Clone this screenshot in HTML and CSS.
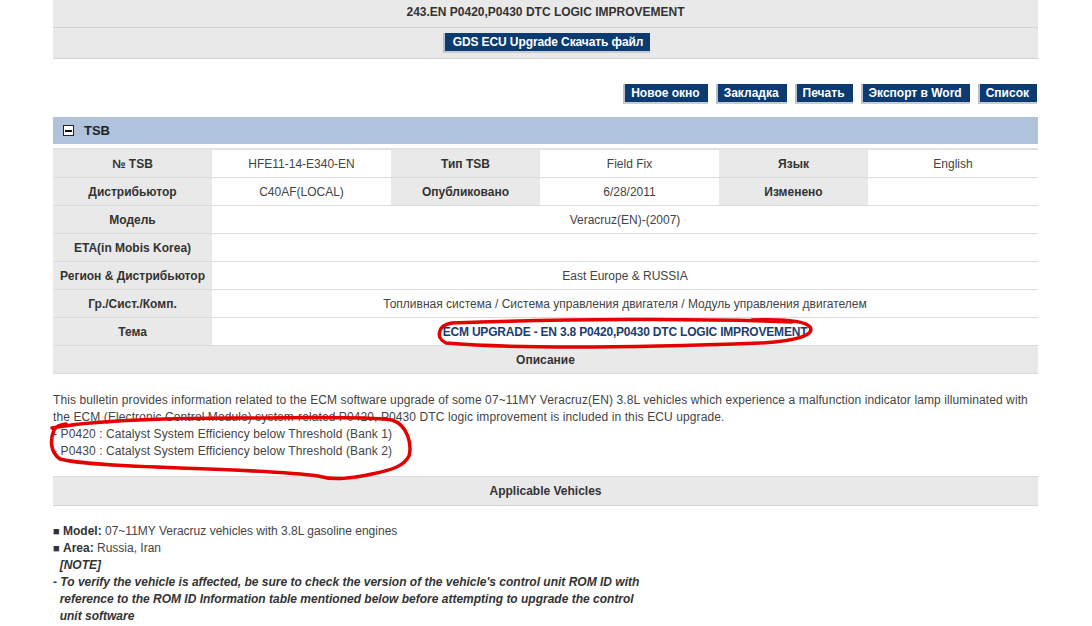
FILE: index.html
```html
<!DOCTYPE html>
<html lang="ru">
<head>
  <meta charset="UTF-8" />
  <title>TSB HFE11-14-E340-EN</title>
  <link rel="stylesheet" href="styles.css">
</head>
<body>
  <div class="page">
    <div class="title-row">243.EN P0420,P0430 DTC LOGIC IMPROVEMENT</div>
    <div class="download-row">
      <button class="btn">GDS ECU Upgrade Скачать файл</button>
    </div>

    <div class="toolbar">
      <button class="btn">Новое окно</button>
      <button class="btn">Закладка</button>
      <button class="btn">Печать</button>
      <button class="btn">Экспорт в Word</button>
      <button class="btn">Список</button>
    </div>

    <div class="section-bar">
      <span class="toggle"></span>
      <span>TSB</span>
    </div>

    <table class="info">
      <colgroup>
        <col style="width:159px"><col style="width:179px"><col style="width:149px">
        <col style="width:179px"><col style="width:149px"><col>
      </colgroup>
      <tr>
        <th>№ TSB</th><td>HFE11-14-E340-EN</td>
        <th>Тип TSB</th><td>Field Fix</td>
        <th>Язык</th><td>English</td>
      </tr>
      <tr>
        <th>Дистрибьютор</th><td>C40AF(LOCAL)</td>
        <th>Опубликовано</th><td>6/28/2011</td>
        <th>Изменено</th><td></td>
      </tr>
      <tr><th>Модель</th><td colspan="5">Veracruz(EN)-(2007)</td></tr>
      <tr><th>ETA(in Mobis Korea)</th><td colspan="5"></td></tr>
      <tr><th>Регион &amp; Дистрибьютор</th><td colspan="5">East Europe &amp; RUSSIA</td></tr>
      <tr><th>Гр./Сист./Комп.</th><td colspan="5">Топливная система / Система управления двигателя / Модуль управления двигателем</td></tr>
      <tr><th>Тема</th><td colspan="5" class="subject">ECM UPGRADE - EN 3.8 P0420,P0430 DTC LOGIC IMPROVEMENT</td></tr>
      <tr><th colspan="6">Описание</th></tr>
    </table>

    <div class="description">
      This bulletin provides information related to the ECM software upgrade of some 07~11MY Veracruz(EN) 3.8L vehicles which experience a malfunction indicator lamp illuminated with the ECM (Electronic Control Module) system-related P0420, P0430 DTC logic improvement is included in this ECU upgrade.<br>
      - P0420 : Catalyst System Efficiency below Threshold (Bank 1)<br>
      - P0430 : Catalyst System Efficiency below Threshold (Bank 2)
    </div>

    <div class="sub-header">Applicable Vehicles</div>

    <div class="vehicles">
      <div><span class="sq">■</span> <b>Model:</b> 07~11MY Veracruz vehicles with 3.8L gasoline engines</div>
      <div><span class="sq">■</span> <b>Area:</b> Russia, Iran</div>
      <div class="note">&nbsp;&nbsp;[NOTE]</div>
      <div class="note">- To verify the vehicle is affected, be sure to check the version of the vehicle's control unit ROM ID with<br>
        &nbsp;&nbsp;reference to the ROM ID Information table mentioned below before attempting to upgrade the control<br>
        &nbsp;&nbsp;unit software</div>
    </div>
  </div>

  <!-- red marker loops drawn over the screenshot -->
  <svg class="marks" width="1092" height="626" viewBox="0 0 1092 626">
    <path d="M792 322 C700 318 560 319 452 323 C438 325 435 338 446 343 C520 349 650 347 760 343 C800 341 815 334 810 327 C805 320 780 319 752 320" />
    <path d="M52 428 C90 421 160 418 240 418 C300 418 360 416 392 420 C408 425 412 445 409 456 C404 466 392 470 372 474 C352 478 335 481 318 476 C290 472 240 470 180 468 C120 466 80 464 60 459 C50 452 50 440 54 430 C56 426 60 425 66 424" />
  </svg>
</body>
</html>
```

FILE: styles.css
```css
body {
  margin: 0;
  font-family: "Liberation Sans", Arial, sans-serif;
  font-size: 12px;
  color: #444;
  background: #fff;
}
.page {
  width: 985px;
  margin-left: 53px;
}
.title-row {
  height: 27px;
  line-height: 25px;
  text-align: center;
  font-weight: bold;
  color: #333;
  background: #e9e9e9;
  border-bottom: 1px solid #d2d2d2;
}
.download-row {
  height: 30px;
  display: flex;
  justify-content: center;
  align-items: center;
  background: #e9e9e9;
  border-bottom: 1px solid #d2d2d2;
}
.download-row .btn {
  padding: 0 7px 0 8px;
  margin-left: 2px;
  letter-spacing: -0.1px;
}
.btn {
  height: 20px;
  padding: 0 8px;
  font-family: inherit;
  font-size: 12px;
  font-weight: bold;
  color: #fff;
  background: #0b3b70;
  border: none;
  border-left: 2px solid #b8bfcb;
  border-bottom: 2px solid #c8ccd2;
  cursor: pointer;
}
.toolbar {
  display: flex;
  justify-content: flex-end;
  gap: 8px;
  margin-top: 25px;
  padding-right: 1px;
}
.toolbar .btn {
  padding: 0 8px 0 6px;
}
.section-bar {
  display: flex;
  align-items: center;
  gap: 10px;
  height: 27px;
  margin-top: 13px;
  padding-left: 10px;
  background: #b0c3dc;
  font-weight: bold;
  font-size: 13px;
  color: #222;
}
.toggle {
  width: 9px;
  height: 9px;
  border: 1px solid #222;
  background: #fff;
  position: relative;
}
.toggle::after {
  content: "";
  position: absolute;
  left: 1px;
  right: 1px;
  top: 4px;
  height: 2px;
  background: #111;
}
.info {
  width: 100%;
  margin-top: 4px;
  border-collapse: collapse;
  table-layout: fixed;
  border-top: 2px solid #e2e2e2;
}
.info th,
.info td {
  height: 27px;
  padding: 0;
  text-align: center;
  border-bottom: 1px solid #dcdcdc;
}
.info th {
  background: #e9e9e9;
  color: #333;
}
.info td {
  background: #fff;
  color: #444;
}
.info td.subject {
  font-weight: bold;
  color: #1b3d6e;
  letter-spacing: -0.2px;
}
.description {
  margin-top: 18px;
  line-height: 17px;
  color: #444;
  letter-spacing: 0.1px;
}
.sub-header {
  height: 28px;
  line-height: 29px;
  margin-top: 16px;
  text-align: center;
  font-weight: bold;
  color: #333;
  background: #e9e9e9;
  border-top: 1px solid #dcdcdc;
  border-bottom: 1px solid #d2d2d2;
}
.vehicles {
  margin-top: 17px;
  line-height: 17px;
  color: #444;
}
.vehicles b {
  color: #333;
}
.sq {
  font-size: 11px;
  color: #333;
}
.note {
  font-weight: bold;
  font-style: italic;
  color: #333;
}
.marks {
  position: absolute;
  left: 0;
  top: 0;
  pointer-events: none;
}
.marks path {
  fill: none;
  stroke: #e50000;
  stroke-width: 3.5;
  stroke-linecap: round;
}
```
